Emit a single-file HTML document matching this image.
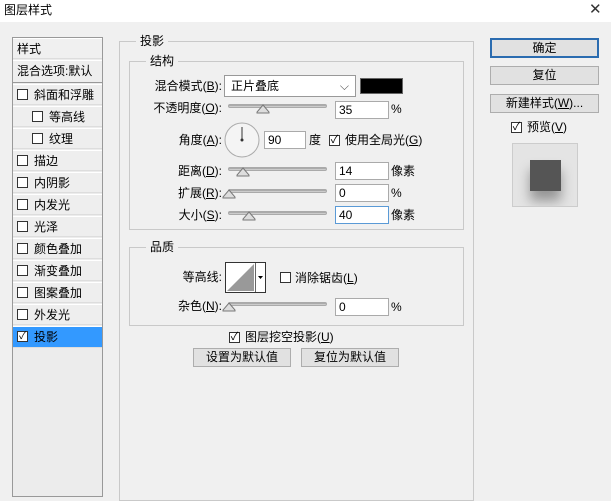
<!DOCTYPE html><html><head><meta charset="utf-8"><style>
*{box-sizing:border-box;margin:0;padding:0}
body{width:611px;height:484px;background:#f0f0f0;position:relative;overflow:hidden;font-family:"Liberation Sans","Noto Sans CJK SC","Microsoft YaHei",sans-serif;font-size:12px;color:#000}
.a{position:absolute;white-space:nowrap;line-height:16px}
.r{text-align:right}
.box{position:absolute;border:1px solid #c9c9c9}
.leg{position:absolute;background:#f0f0f0;padding:0 4px;line-height:14px}
.cb{position:absolute;width:11px;height:11px;border:1px solid #333;background:#fff}
.li{position:absolute;left:13px;width:89px;height:21px;border-top:1px solid #fff;border-bottom:1px solid #ddd;background:#eeeeee;line-height:20px}
.track{position:absolute;height:4px;background:linear-gradient(#9a9a9a,#dcdcdc);border-radius:2px;border:1px solid #aaa}
.th{position:absolute;width:0;height:0}
.inp{position:absolute;background:#fff;border:1px solid #aaa;height:18px;line-height:16px;padding-left:3px}
.btn{position:absolute;background:#e1e1e1;border:1px solid #adadad;text-align:center;line-height:16px}
</style></head><body>
<div style="position:absolute;left:0;top:0;width:611px;height:22px;background:#fff"></div>
<div class="a" style="left:4px;top:2px">图层样式</div>
<div class="a" style="left:589px;top:2px;font-size:15px;color:#333">✕</div>

<div style="position:absolute;left:12px;top:37px;width:91px;height:460px;border:1px solid #999;background:#ececec"></div>
<div class="li" style="top:38px;padding-left:4px;background:#f0f0f0">样式</div>
<div class="li" style="top:60px;padding-left:4px;height:23px;border-bottom:1px solid #999">混合选项:默认</div>
<div class="li" style="top:84px;padding-left:21px">斜面和浮雕</div><div class="cb" style="left:17px;top:89px"></div>
<div class="li" style="top:106px;padding-left:36px">等高线</div><div class="cb" style="left:32px;top:111px"></div>
<div class="li" style="top:128px;padding-left:36px">纹理</div><div class="cb" style="left:32px;top:133px"></div>
<div class="li" style="top:150px;padding-left:21px">描边</div><div class="cb" style="left:17px;top:155px"></div>
<div class="li" style="top:172px;padding-left:21px">内阴影</div><div class="cb" style="left:17px;top:177px"></div>
<div class="li" style="top:194px;padding-left:21px">内发光</div><div class="cb" style="left:17px;top:199px"></div>
<div class="li" style="top:216px;padding-left:21px">光泽</div><div class="cb" style="left:17px;top:221px"></div>
<div class="li" style="top:238px;padding-left:21px">颜色叠加</div><div class="cb" style="left:17px;top:243px"></div>
<div class="li" style="top:260px;padding-left:21px">渐变叠加</div><div class="cb" style="left:17px;top:265px"></div>
<div class="li" style="top:282px;padding-left:21px">图案叠加</div><div class="cb" style="left:17px;top:287px"></div>
<div class="li" style="top:304px;padding-left:21px">外发光</div><div class="cb" style="left:17px;top:309px"></div>
<div class="li" style="top:326px;padding-left:21px;background:#3399ff;height:22px">投影</div>
<div class="cb" style="left:17px;top:331px;font-size:10px;line-height:9px;text-align:center">✓</div>

<div class="box" style="left:119px;top:41px;width:355px;height:460px"></div>
<div class="leg" style="left:136px;top:34px">投影</div>
<div class="box" style="left:129px;top:61px;width:335px;height:169px"></div>
<div class="leg" style="left:146px;top:54px">结构</div>

<div class="a r" style="left:120px;width:102px;top:78px">混合模式(<u>B</u>):</div>
<div class="inp" style="left:224px;top:75px;width:132px;height:22px;line-height:20px;padding-left:6px;border-color:#999">正片叠底<span style="position:absolute;right:6px;top:0;color:#555">⌵</span></div>
<div style="position:absolute;left:360px;top:78px;width:43px;height:16px;background:#000;border:1px solid #666"></div>

<div class="a r" style="left:120px;width:102px;top:100px">不透明度(<u>O</u>):</div>
<div class="track" style="left:228px;top:104px;width:99px"></div>
<svg class="th" style="left:256px;top:104px;width:14px;height:10px;position:absolute" viewBox="0 0 14 10"><path d="M7 1 L13 8 L13 9 L1 9 L1 8Z" fill="#ddd" stroke="#777"/></svg>
<div class="inp" style="left:335px;top:101px;width:54px">35</div><div class="a" style="left:391px;top:101px">%</div>

<div class="a r" style="left:120px;width:102px;top:132px">角度(<u>A</u>):</div>
<svg style="position:absolute;left:224px;top:122px" width="36" height="36"><circle cx="18" cy="18" r="17" fill="#f4f4f4" stroke="#aaa"/><line x1="18" y1="18" x2="18" y2="5" stroke="#333"/><circle cx="18" cy="18" r="1.5" fill="#333"/></svg>
<div class="inp" style="left:264px;top:131px;width:42px">90</div><div class="a" style="left:309px;top:132px">度</div>
<div class="cb" style="left:329px;top:135px;font-size:11px;line-height:9px;text-align:center">✓</div><div class="a" style="left:345px;top:132px">使用全局光(<u>G</u>)</div>

<div class="a r" style="left:120px;width:102px;top:163px">距离(<u>D</u>):</div>
<div class="track" style="left:228px;top:167px;width:99px"></div>
<svg style="left:236px;top:167px;position:absolute" width="14" height="10" viewBox="0 0 14 10"><path d="M7 1 L13 8 L13 9 L1 9 L1 8Z" fill="#ddd" stroke="#777"/></svg>
<div class="inp" style="left:335px;top:162px;width:54px">14</div><div class="a" style="left:391px;top:163px">像素</div>

<div class="a r" style="left:120px;width:102px;top:185px">扩展(<u>R</u>):</div>
<div class="track" style="left:228px;top:189px;width:99px"></div>
<svg style="left:222px;top:189px;position:absolute" width="14" height="10" viewBox="0 0 14 10"><path d="M7 1 L13 8 L13 9 L1 9 L1 8Z" fill="#ddd" stroke="#777"/></svg>
<div class="inp" style="left:335px;top:184px;width:54px">0</div><div class="a" style="left:391px;top:185px">%</div>

<div class="a r" style="left:120px;width:102px;top:207px">大小(<u>S</u>):</div>
<div class="track" style="left:228px;top:211px;width:99px"></div>
<svg style="left:242px;top:211px;position:absolute" width="14" height="10" viewBox="0 0 14 10"><path d="M7 1 L13 8 L13 9 L1 9 L1 8Z" fill="#ddd" stroke="#777"/></svg>
<div class="inp" style="left:335px;top:206px;width:54px;border-color:#5a9ad6">40</div><div class="a" style="left:391px;top:207px">像素</div>

<div class="box" style="left:129px;top:247px;width:335px;height:79px"></div>
<div class="leg" style="left:146px;top:240px">品质</div>
<div class="a r" style="left:120px;width:102px;top:269px">等高线:</div>
<svg style="position:absolute;left:225px;top:262px" width="41" height="31"><rect x="0.5" y="0.5" width="40" height="30" fill="#fff" stroke="#333"/><path d="M2 29 L29 2 L29 29Z" fill="#999"/><line x1="30.5" y1="1" x2="30.5" y2="30" stroke="#666"/><path d="M33 14 L38 14 L35.5 17Z" fill="#000"/></svg>
<div class="cb" style="left:280px;top:272px"></div><div class="a" style="left:295px;top:270px">消除锯齿(<u>L</u>)</div>
<div class="a r" style="left:120px;width:102px;top:298px">杂色(<u>N</u>):</div>
<div class="track" style="left:228px;top:302px;width:99px"></div>
<svg style="left:222px;top:302px;position:absolute" width="14" height="10" viewBox="0 0 14 10"><path d="M7 1 L13 8 L13 9 L1 9 L1 8Z" fill="#ddd" stroke="#777"/></svg>
<div class="inp" style="left:335px;top:298px;width:54px">0</div><div class="a" style="left:391px;top:299px">%</div>

<div class="cb" style="left:229px;top:332px;font-size:11px;line-height:9px;text-align:center">✓</div><div class="a" style="left:245px;top:329px">图层挖空投影(<u>U</u>)</div>
<div class="btn" style="left:193px;top:348px;width:98px;height:19px">设置为默认值</div>
<div class="btn" style="left:301px;top:348px;width:98px;height:19px">复位为默认值</div>

<div class="btn" style="left:490px;top:38px;width:109px;height:20px;border:2px solid #2b6cb0;line-height:16px">确定</div>
<div class="btn" style="left:490px;top:66px;width:109px;height:19px">复位</div>
<div class="btn" style="left:490px;top:94px;width:109px;height:19px">新建样式(<u>W</u>)...</div>
<div class="cb" style="left:511px;top:122px;font-size:11px;line-height:9px;text-align:center">✓</div><div class="a" style="left:527px;top:119px">预览(<u>V</u>)</div>
<div style="position:absolute;left:512px;top:143px;width:66px;height:64px;background:#e4e4e4;border:1px solid #ccc;overflow:hidden">
<div style="position:absolute;left:17px;top:16px;width:31px;height:31px;background:#555;box-shadow:0 10px 12px rgba(0,0,0,.35)"></div></div>
</body></html>
